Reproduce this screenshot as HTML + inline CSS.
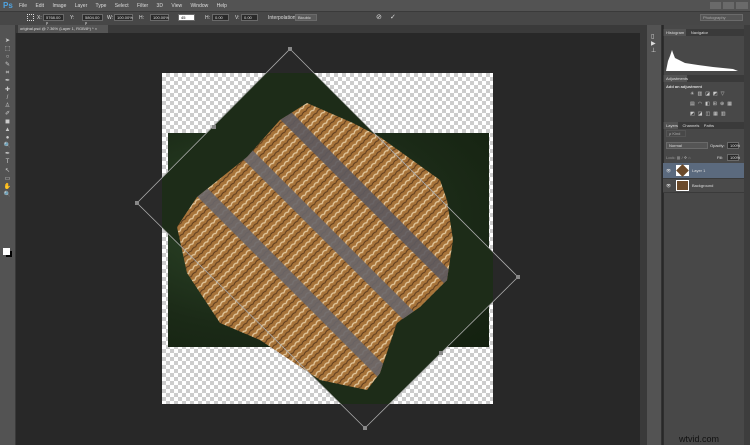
<!DOCTYPE html>
<html><head><meta charset="utf-8"><style>
*{margin:0;padding:0;box-sizing:border-box}
body{width:750px;height:445px;overflow:hidden;background:#282828;font-family:"Liberation Sans",sans-serif;position:relative;color:#ddd}
.a{position:absolute}
.t{font-size:5px;color:#ddd;white-space:nowrap}
.box{position:absolute;height:7px;background:#2a2a2a;border:1px solid #6a6a6a;font-size:4px;color:#ddd;padding-left:2px;line-height:5px}
.chk{background-color:#fff;background-image:linear-gradient(45deg,#ccc 25%,transparent 25%,transparent 75%,#ccc 75%),linear-gradient(45deg,#ccc 25%,transparent 25%,transparent 75%,#ccc 75%);background-size:8px 8px;background-position:0 0,4px 4px}
</style></head><body>
<div class="a" style="left:0;top:0;width:750px;height:11px;background:#535353"></div>
<div class="a" style="left:3px;top:1px;font-size:8px;color:#4fa3e0;font-weight:bold">Ps</div>
<div class="a t" style="left:19px;top:3px;word-spacing:7px">File Edit Image Layer Type Select Filter 3D View Window Help</div>
<div class="a" style="left:710px;top:2px;width:11px;height:7px;background:#6a6a6a"></div>
<div class="a" style="left:723px;top:2px;width:11px;height:7px;background:#6a6a6a"></div>
<div class="a" style="left:736px;top:2px;width:12px;height:7px;background:#6a6a6a"></div>
<div class="a" style="left:0;top:11px;width:750px;height:14px;background:#474747;border-top:1px solid #3a3a3a"></div>
<div class="a" style="left:27px;top:14px;width:7px;height:7px;border:1px dotted #ddd"></div>
<div class="a t" style="left:37px;top:15px">X:</div><div class="box" style="left:43px;top:14px;width:21px">5768.00 p</div>
<div class="a t" style="left:70px;top:15px">Y:</div><div class="box" style="left:82px;top:14px;width:21px">5804.00 p</div>
<div class="a t" style="left:107px;top:15px">W:</div><div class="box" style="left:114px;top:14px;width:19px">100.00%</div>
<div class="a t" style="left:139px;top:15px">H:</div><div class="box" style="left:150px;top:14px;width:19px">100.00%</div>
<div class="box" style="left:178px;top:14px;width:17px;background:#fff;color:#000">45</div>
<div class="a t" style="left:205px;top:15px">H:</div><div class="box" style="left:212px;top:14px;width:17px">0.00</div>
<div class="a t" style="left:235px;top:15px">V:</div><div class="box" style="left:241px;top:14px;width:17px">0.00</div>
<div class="a t" style="left:268px;top:15px">Interpolation:</div><div class="box" style="left:295px;top:14px;width:22px;background:#5a5a5a">Bicubic</div>
<div class="a t" style="left:376px;top:13px;font-size:7px">⊘</div>
<div class="a t" style="left:390px;top:13px;font-size:7px">✓</div>
<div class="box" style="left:700px;top:14px;width:43px;background:#555;color:#aaa">Photography</div>
<div class="a" style="left:16px;top:25px;width:624px;height:8px;background:#3a3a3a"></div>
<div class="a" style="left:18px;top:25px;width:90px;height:8px;background:#555"></div>
<div class="a t" style="left:20px;top:26px;font-size:4px">original.psd @ 7.36% (Layer 1, RGB/8*) * ×</div>
<div class="a" style="left:0;top:25px;width:16px;height:420px;background:#535353;border-right:1px solid #3a3a3a"></div>
<div class="a" style="left:2px;top:37px;width:11px;height:250px;font-size:6px;color:#ccc;line-height:8.1px;text-align:center">➤<br>⬚<br>○<br>✎<br>⌗<br>✒<br>✚<br>/<br>♙<br>✐<br>◼<br>▲<br>●<br>🔍<br>✒<br>T<br>↖<br>▭<br>✋<br>🔍</div>
<div class="a" style="left:6px;top:251px;width:6px;height:6px;background:#000"></div>
<div class="a" style="left:3px;top:248px;width:7px;height:7px;background:#fff"></div>
<div class="a chk" style="left:162px;top:73px;width:331px;height:331px"></div>
<div class="a" style="left:168px;top:133px;width:321px;height:214px;background:radial-gradient(ellipse at 30% 40%,#2f4a2a,#1b2a17 60%,#13200f)"></div>
<svg class="a" style="left:0;top:0" width="750" height="445">
<defs>
<clipPath id="cv"><rect x="162" y="73" width="331" height="331"/></clipPath>
<clipPath id="fz"><polygon points="307,103 353,123 380,137 440,180 447,200 453,240 447,280 420,307 397,323 380,373 367,390 320,380 260,340 220,323 187,273 177,227 197,197 247,157 280,120"/></clipPath>
<pattern id="fg" width="9" height="6" patternUnits="userSpaceOnUse" patternTransform="rotate(45)">
<rect width="9" height="6" fill="#a8743a"/><path d="M3 0 Q0 3 3 6" stroke="#e3c9a0" stroke-width="1.3" fill="none"/><path d="M7 0 Q5 3 7 6" stroke="#5a3a1e" stroke-width="1" fill="none"/></pattern>
</defs>
<g clip-path="url(#cv)">
<polygon points="290,49 518,277 365,428 137,203" fill="#1d2c18"/>
<g clip-path="url(#fz)">
<rect x="160" y="90" width="300" height="310" fill="url(#fg)"/>
<g stroke-width="13" opacity=".9">
<line x1="230" y1="137" x2="440" y2="347" stroke="#6a666a"/>
<line x1="275" y1="105" x2="480" y2="310" stroke="#5e5a60"/>
<line x1="190" y1="180" x2="400" y2="390" stroke="#6a666a"/>
</g>
</g>
</g>
<polygon points="290,49 518,277 365,428 137,203" fill="none" stroke="#aaa" stroke-width="0.8"/>
<g fill="#888"><rect x="288" y="47" width="4" height="4"/><rect x="516" y="275" width="4" height="4"/><rect x="363" y="426" width="4" height="4"/><rect x="135" y="201" width="4" height="4"/><rect x="212" y="125" width="4" height="4"/><rect x="439" y="351" width="4" height="4"/></g>
</svg>
<div class="a" style="left:640px;top:25px;width:7px;height:420px;background:#3a3a3a"></div>
<div class="a" style="left:647px;top:25px;width:15px;height:420px;background:#535353;border-right:1px solid #333"></div>
<div class="a t" style="left:651px;top:33px;font-size:6px">▯<br>▶<br>⊥</div>
<div class="a" style="left:663px;top:25px;width:87px;height:420px;background:#484848;border-left:1px solid #2e2e2e"></div>
<div class="a" style="left:744px;top:25px;width:6px;height:420px;background:#3d3d3d"></div>
<div class="a" style="left:663px;top:29px;width:81px;height:7px;background:#3a3a3a"></div>
<div class="a" style="left:664px;top:29px;width:22px;height:7px;background:#535353"></div>
<div class="a t" style="left:666px;top:30px;font-size:4px">Histogram &nbsp;&nbsp;&nbsp;&nbsp; Navigator</div>
<svg class="a" style="left:663px;top:36px" width="81" height="38"><polygon points="3,35 5,25 7,20 9,14 10,17 12,22 16,24 22,27 35,29 50,31 70,33 75,35" fill="#fff"/></svg>
<div class="a" style="left:663px;top:75px;width:81px;height:7px;background:#3a3a3a"></div>
<div class="a" style="left:664px;top:75px;width:23px;height:7px;background:#535353"></div>
<div class="a t" style="left:666px;top:76px;font-size:4px">Adjustments</div>
<div class="a t" style="left:666px;top:84px;font-size:4px;font-weight:bold">Add an adjustment</div>
<div class="a" style="left:690px;top:89px;font-size:5px;color:#ccc;letter-spacing:3px;line-height:10px">☀▥◪◩▽<br>▤◠◧⊞⊕▦<br>◩◪◫▦▥</div>
<div class="a" style="left:663px;top:122px;width:81px;height:7px;background:#3a3a3a"></div>
<div class="a" style="left:664px;top:122px;width:14px;height:7px;background:#535353"></div>
<div class="a t" style="left:666px;top:123px;font-size:4px">Layers &nbsp;&nbsp; Channels &nbsp;&nbsp; Paths</div>
<div class="box" style="left:666px;top:130px;width:20px;background:#484848;border-color:#555;color:#aaa">ρ Kind</div>
<div class="box" style="left:666px;top:142px;width:42px;background:#555">Normal</div>
<div class="a t" style="left:710px;top:143px;font-size:4px">Opacity:</div><div class="box" style="left:727px;top:142px;width:12px">100%</div>
<div class="a t" style="left:666px;top:155px;font-size:4px;color:#999">Lock: ▦ / ✥ ⌂</div>
<div class="a t" style="left:717px;top:155px;font-size:4px">Fill:</div><div class="box" style="left:727px;top:154px;width:12px">100%</div>
<div class="a" style="left:663px;top:163px;width:81px;height:15px;background:#5b6a7e"></div>
<div class="a" style="left:663px;top:178px;width:81px;height:15px;background:#4a4a4a;border-top:1px solid #3a3a3a;border-bottom:1px solid #3a3a3a"></div>
<div class="a" style="left:676px;top:165px;width:13px;height:11px;background:#fff"><div style="margin:1px 2px;width:9px;height:9px;background:#6b4a2a;transform:rotate(45deg)"></div></div>
<div class="a" style="left:676px;top:180px;width:13px;height:11px;background:#6b4a2a;border:1px solid #fff"></div>
<div class="a t" style="left:666px;top:168px;font-size:4px">👁</div>
<div class="a t" style="left:666px;top:183px;font-size:4px">👁</div>
<div class="a t" style="left:692px;top:168px;font-size:4px">Layer 1</div>
<div class="a t" style="left:692px;top:183px;font-size:4px">Background</div>
<div class="a" style="left:679px;top:434px;font-size:9px;color:#111">wtvid.com</div>
</body></html>
